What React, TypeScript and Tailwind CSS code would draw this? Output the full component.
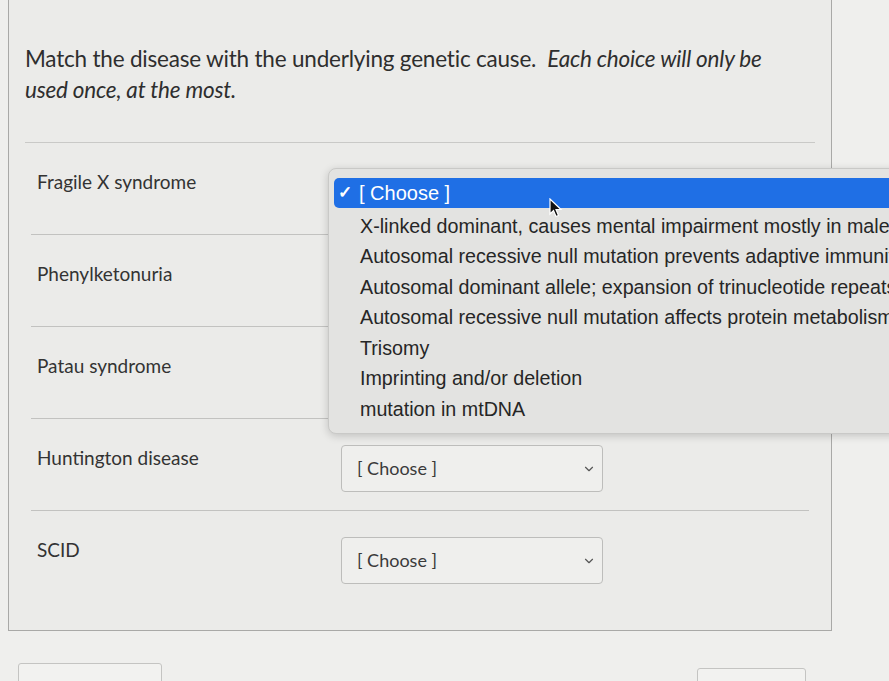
import { ChevronDown } from 'lucide-react';

const rows = ['Fragile X syndrome', 'Phenylketonuria', 'Patau syndrome', 'Huntington disease', 'SCID'];

const options = [
  'X-linked dominant, causes mental impairment mostly in males',
  'Autosomal recessive null mutation prevents adaptive immunity',
  'Autosomal dominant allele; expansion of trinucleotide repeats',
  'Autosomal recessive null mutation affects protein metabolism',
  'Trisomy',
  'Imprinting and/or deletion',
  'mutation in mtDNA',
];

// the first three selects sit under the open menu, so only their boxes show
function Select({ covered }: { covered: boolean }) {
  return (
    <div className="mt-[2px] flex h-[47px] w-[262px] items-center justify-between rounded-[4px] border border-[#bdbdbb] bg-[#efefed] pl-[15px] pr-[6px] text-[18px] text-[#3a3a3a]">
      {!covered && <span>[ Choose ]</span>}
      {!covered && <ChevronDown size={14} strokeWidth={2} className="text-[#555]" />}
    </div>
  );
}

export default function App() {
  return (
    <div className="relative h-[681px] w-[889px] overflow-hidden bg-[#efefed] font-['Lato',sans-serif]">
      <div className="ml-[8px] mt-[-2px] h-[633px] w-[824px] border border-[#a9a9a7] bg-[#ebebe9] pt-[44px]">
        <p className="max-w-[790px] px-[16px] text-[22.5px] leading-[31px] tracking-[-0.2px] text-[#2e2e2e]">
          Match the disease with the underlying genetic cause.{'\u00a0 '}
          <em>Each choice will only be used once, at the most.</em>
        </p>
        <div className="mx-[16px] mt-[37px] border-t border-[#c9c9c7]" />
        <div className="px-[22px]">
          {rows.map((r, i) => (
            <div key={r} className={`flex pb-[18px] pt-[24px] ${i < rows.length - 1 ? 'border-b border-[#c2c2c0]' : ''}`}>
              <div className="w-[310px] pl-[6px] pt-[1px] text-[19px] text-[#333]">{r}</div>
              <Select covered={i < 3} />
            </div>
          ))}
        </div>
      </div>

      <div className="mt-[32px] flex justify-between pl-[18px] pr-[83px]">
        <div className="h-[40px] w-[144px] rounded-[3px] border border-[#c4c4c2] bg-[#f2f2f0]" />
        <div className="mt-[5px] h-[40px] w-[109px] rounded-[3px] border border-[#c4c4c2] bg-[#f2f2f0]" />
      </div>

      <div className="absolute left-[328px] top-[168px] w-[620px] rounded-[8px] border border-[#c9c9c7] bg-[#e3e3e1] px-[5px] pb-[8px] pt-[9px] font-['Liberation_Sans',Arial,sans-serif] shadow-[0_2px_8px_rgba(0,0,0,0.18)]">
        <div className="flex h-[30px] items-center rounded-[5px] bg-[#1f6fe5] pl-[4px] text-[20px] text-white">
          <span className="w-[21px] text-[17px] font-bold">✓</span>
          <span>[ Choose ]</span>
        </div>
        <div className="mt-[3px]">
          {options.map((o) => (
            <div key={o} className="flex h-[30.6px] items-center whitespace-nowrap pl-[26px] text-[19.7px] text-[#262626]">
              {o}
            </div>
          ))}
        </div>
      </div>

      <svg className="absolute left-[549px] top-[198px]" width="14" height="20" viewBox="0 0 14 20">
        <path d="M1 1 L1 16 L4.5 12.5 L7 18.5 L9.5 17.5 L7 11.5 L12 11.5 Z" fill="#111" stroke="#fff" strokeWidth="1.2" />
      </svg>
    </div>
  );
}
